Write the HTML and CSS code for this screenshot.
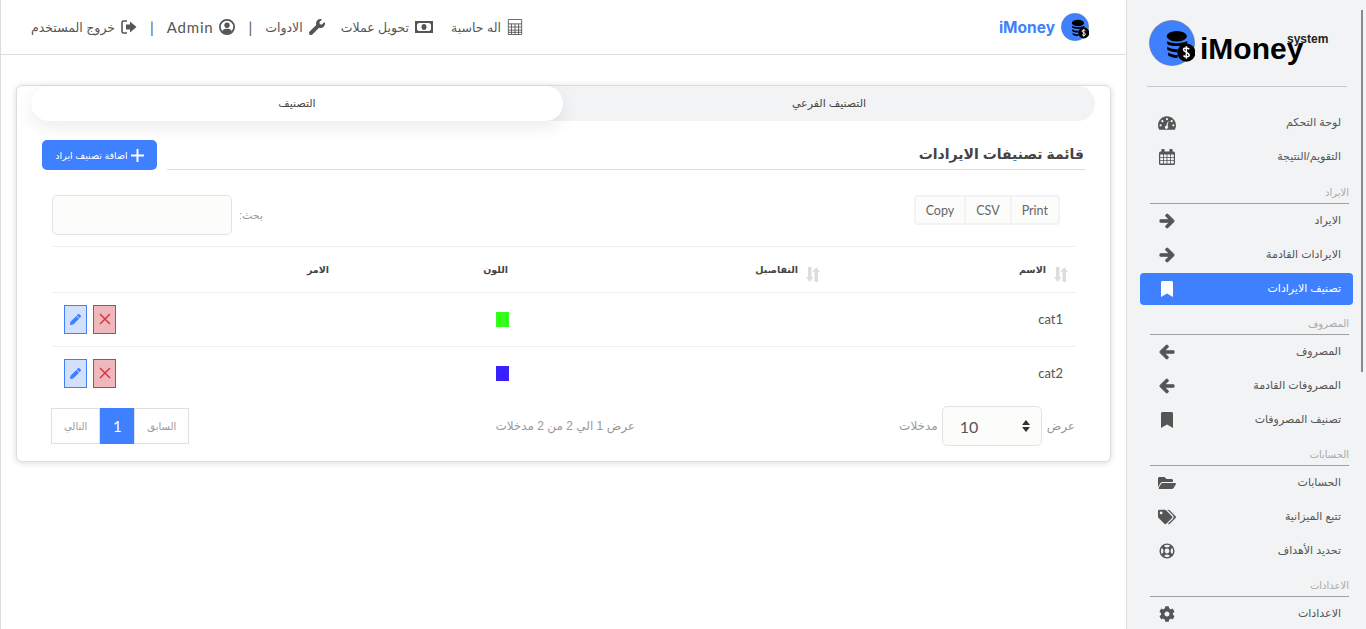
FILE: index.html
```html
<!DOCTYPE html>
<html lang="ar" dir="rtl">
<head>
  <meta charset="UTF-8">
  <title>iMoney</title>
  <link rel="stylesheet" href="styles.css">
</head>
<body>

  <svg class="icon-defs" xmlns="http://www.w3.org/2000/svg">
    <symbol id="i-right" viewBox="0 0 448 512"><path stroke="#555" stroke-width="36" d="M190.5 66.9l22.2-22.2c9.4-9.4 24.6-9.4 33.9 0L441 239c9.4 9.4 9.4 24.6 0 33.9L246.6 467.3c-9.4 9.4-24.6 9.4-33.9 0l-22.2-22.2c-9.5-9.5-9.3-25 .4-34.3L311.4 296H24c-13.3 0-24-10.7-24-24v-32c0-13.3 10.7-24 24-24h287.4L190.9 101.2c-9.8-9.3-10-24.8-.4-34.3z"/></symbol>
    <symbol id="i-left" viewBox="0 0 448 512"><path stroke="#555" stroke-width="36" d="M257.5 445.1l-22.2 22.2c-9.4 9.4-24.6 9.4-33.9 0L7 273c-9.4-9.4-9.4-24.6 0-33.9L201.4 44.7c9.4-9.4 24.6-9.4 33.9 0l22.2 22.2c9.5 9.5 9.3 25-.4 34.3L136.6 216H424c13.3 0 24 10.7 24 24v32c0 13.3-10.7 24-24 24H136.6l120.5 114.8c9.8 9.3 10 24.8.4 34.3z"/></symbol>
    <symbol id="i-bookmark" viewBox="0 0 384 512"><path d="M0 512V48C0 21.49 21.49 0 48 0h288c26.51 0 48 21.49 48 48v464L192 400 0 512z"/></symbol>
    <symbol id="i-folder" viewBox="0 0 576 512"><path d="M572.694 292.093L500.27 416.248A63.997 63.997 0 0 1 444.989 448H45.025c-18.523 0-30.064-20.093-20.731-36.093l72.424-124.155A64 64 0 0 1 152 256h399.964c18.523 0 30.064 20.093 20.73 36.093zM152 224h328v-48c0-26.51-21.49-48-48-48H272l-64-64H48C21.49 64 0 85.49 0 112v278.046l69.077-118.418C86.214 242.25 117.989 224 152 224z"/></symbol>
    <symbol id="i-tags" viewBox="0 0 640 512"><path d="M497.941 225.941L286.059 14.059A48 48 0 0 0 252.118 0H48C21.49 0 0 21.49 0 48v204.118a48 48 0 0 0 14.059 33.941l211.882 211.882c18.744 18.745 49.136 18.746 67.882 0l204.118-204.118c18.745-18.745 18.745-49.137 0-67.882zM112 160c-26.51 0-48-21.49-48-48s21.49-48 48-48 48 21.49 48 48-21.49 48-48 48zm513.941 133.823L421.823 497.941c-18.745 18.745-49.137 18.745-67.882 0l-.36-.36L527.64 323.522c16.999-16.999 26.36-39.6 26.36-63.64s-9.362-46.641-26.36-63.64L331.397 0h48.721a48 48 0 0 1 33.941 14.059l211.882 211.882c18.745 18.745 18.745 49.137 0 67.882z"/></symbol>
    <symbol id="i-cog" viewBox="0 0 512 512"><path d="M487.4 315.7l-42.6-24.6c4.3-23.2 4.3-47 0-70.2l42.6-24.6c4.9-2.8 7.1-8.6 5.5-14-11.1-35.6-30-67.8-54.7-94.6-3.8-4.1-10-5.1-14.8-2.3L380.8 110c-17.9-15.4-38.5-27.3-60.8-35.1V25.8c0-5.6-3.9-10.5-9.4-11.7-36.7-8.2-74.3-7.8-109.2 0-5.5 1.2-9.4 6.1-9.4 11.7V75c-22.2 7.9-42.8 19.8-60.8 35.1L88.7 85.5c-4.9-2.8-11-1.9-14.8 2.3-24.7 26.7-43.6 58.9-54.7 94.6-1.7 5.4.6 11.2 5.5 14L67.3 221c-4.3 23.2-4.3 47 0 70.2l-42.6 24.6c-4.9 2.8-7.1 8.6-5.5 14 11.1 35.6 30 67.8 54.7 94.6 3.8 4.1 10 5.1 14.8 2.3l42.6-24.6c17.9 15.4 38.5 27.3 60.8 35.1v49.2c0 5.6 3.9 10.5 9.4 11.7 36.7 8.2 74.3 7.8 109.2 0 5.5-1.2 9.4-6.1 9.4-11.7v-49.2c22.2-7.9 42.8-19.8 60.8-35.1l42.6 24.6c4.9 2.8 11 1.9 14.8-2.3 24.7-26.7 43.6-58.9 54.7-94.6 1.5-5.5-.7-11.3-5.6-14.1zM256 336c-44.1 0-80-35.9-80-80s35.9-80 80-80 80 35.9 80 80-35.9 80-80 80z"/></symbol>
    <symbol id="i-gauge" viewBox="0 0 24 20"><path fill-rule="evenodd" d="M12 1C5.4 1 0 6.4 0 13c0 2 .5 3.900 1.400 5.500.3.500.8.500 1.200.500h18.800c.4 0 .9 0 1.200-.500C23.500 16.900 24 15 24 13 24 6.400 18.600 1 12 1zM12 3.200a1.500 1.500 0 1 1 0 3 1.500 1.500 0 0 1 0-3zM5.800 6a1.500 1.500 0 1 1 0 3 1.500 1.500 0 0 1 0-3zM18.200 6a1.500 1.500 0 1 1 0 3 1.500 1.500 0 0 1 0-3zM3.500 11.500a1.500 1.500 0 1 1 0 3 1.500 1.500 0 0 1 0-3zM20.500 11.500a1.500 1.500 0 1 1 0 3 1.500 1.500 0 0 1 0-3zM13.200 7.500l.9.300-1.300 6.200a2.200 2.200 0 1 1-1.900-.500z"/></symbol>
    <symbol id="i-calendar" viewBox="0 0 20 20"><path fill-rule="evenodd" d="M4 0h2a1 1 0 0 1 1 1v2h6V1a1 1 0 0 1 1-1h2a1 1 0 0 1 1 1v2h1a2 2 0 0 1 2 2v13a2 2 0 0 1-2 2H2a2 2 0 0 1-2-2V5a2 2 0 0 1 2-2h1V1a1 1 0 0 1 1-1zM1.500 7v3h3.500V7zM6 7v3h3.500V7zM10.500 7v3H14V7zM15 7v3h3.500V7zM1.500 11v3h3.500v-3zM6 11v3h3.500v-3zM10.500 11v3H14v-3zM15 11v3h3.500v-3zM1.500 15v3h3.500v-3zM6 15v3h3.500v-3zM10.500 15v3H14v-3zM15 15v3h3.500v-3z"/></symbol>
    <symbol id="i-pen" viewBox="0 0 512 512"><path d="M497.900 142.100l-46.100 46.100c-4.700 4.700-12.300 4.700-17 0l-111-111c-4.700-4.700-4.700-12.300 0-17l46.100-46.100c18.700-18.700 49.100-18.700 67.900 0l60.100 60.100c18.800 18.700 18.800 49.100 0 67.900zM284.200 99.800L21.600 362.400.4 483.900c-2.900 16.400 11.400 30.600 27.800 27.800l121.500-21.300 262.600-262.600c4.700-4.700 4.700-12.300 0-17l-111-111c-4.800-4.700-12.400-4.700-17.100 0z"/></symbol>
    <symbol id="i-wrench" viewBox="0 0 512 512"><path d="M507.730 109.100c-2.240-9.030-13.540-12.090-20.120-5.510l-74.360 74.360-67.880-11.310-11.310-67.880 74.360-74.360c6.620-6.620 3.430-17.900-5.660-20.160-47.380-11.740-99.550.91-136.580 37.930-39.640 39.640-50.550 97.100-34.050 147.200L18.740 402.760c-24.990 24.990-24.990 65.510 0 90.500 24.990 24.990 65.510 24.990 90.500 0l213.210-213.210c50.120 16.710 107.470 5.680 147.370-34.220 37.070-37.070 49.700-89.320 37.910-136.730z"/></symbol>
    <symbol id="i-sort" viewBox="0 0 14 15"><path d="M2 0h3.500v10h2L3.750 15 0 10h2zM8.500 15H12V5h2L10.250 0 6.500 5h2z"/></symbol>
    <symbol id="i-coins" viewBox="0 0 48 48">
      <circle cx="24" cy="24" r="23.500" fill="#3f80ff" stroke="#5a6a80" stroke-width=".6"/>
      <ellipse cx="29" cy="17" rx="10.500" ry="5.500" fill="#000"/>
      <path d="M19 22c3 3 16 3 21 0v3c-5 3-18 3-21 0zM19 28c3 2 8 3 11 2.500v3c-3 .5-8-.5-11-2.500zM20 34c3 2 7 3 10 2.500v3c-3 .5-7-.5-10-2.500z" fill="#000"/>
      <circle cx="39" cy="34" r="9.500" fill="#000"/>
      <path d="M39 27.500v13M42 30.500c-1-1.500-6-2-6 .5s6 2.500 6 5.500-5 2-6 .5" fill="none" stroke="#fff" stroke-width="1.600"/>
    </symbol>
  </svg>

  <div class="app">

    <div class="main">
      <header class="topbar">
        <nav class="top-nav">
          <a class="top-link">
            <svg class="top-icon" viewBox="0 0 16 18"><path fill="none" stroke="#555" stroke-width="1" d="M.5.500h15v17H.5zM.5 5.500h15M.5 9h15M.5 12.500h15M.5 15h15M4 5.500v12M8 5.500v12M12 5.500v12"/></svg>
            اله حاسبة
          </a>
          <a class="top-link link-money">
            <svg class="top-icon wide" viewBox="0 0 18 12"><path fill-rule="evenodd" fill="#555" d="M0 0h18v12H0zM3.500 2 2 3.500v5L3.500 10h11L16 8.500v-5L14.500 2zM9 3c1.500 0 2.500 1.300 2.500 3S10.500 9 9 9 6.500 7.700 6.500 6 7.500 3 9 3z"/></svg>
            تحويل عملات
          </a>
          <a class="top-link link-tools">
            <svg class="top-icon"><use href="#i-wrench"/></svg>
            الادوات
          </a>
          <span class="top-sep">|</span>
          <a class="top-link">
            <svg class="top-icon" viewBox="0 0 18 18"><circle cx="9" cy="9" r="8" fill="none" stroke="#555" stroke-width="2"/><circle cx="9" cy="7" r="3" fill="#555"/><path d="M3.500 14c1-2.500 3-3 5.500-3s4.500.5 5.500 3c-3 3-8 3-11 0z" fill="#555"/></svg>
            <span class="admin-name" dir="ltr">Admin</span>
          </a>
          <span class="top-sep">|</span>
          <a class="top-link">
            <svg class="top-icon" viewBox="0 0 16 14"><path fill="none" stroke="#555" stroke-width="1.600" d="M6 1H2.500A1.500 1.500 0 0 0 1 2.500v9A1.500 1.500 0 0 0 2.500 13H6"/><path fill="#555" d="M5 4.500h4V1.500L15.500 7 9 12.500v-3H5z"/></svg>
            خروج المستخدم
          </a>
        </nav>
        <div class="brand">
          <svg class="brand-logo"><use href="#i-coins"/></svg>
          <span class="brand-name">iMoney</span>
        </div>
      </header>

      <main class="content">
        <section class="card">
          <div class="tabs">
            <div class="tab">التصنيف الفرعي</div>
            <div class="tab active">التصنيف</div>
          </div>

          <div class="title-row">
            <h1 class="title">قائمة تصنيفات الايرادات</h1>
            <button class="add-btn">
              <svg class="add-icon" viewBox="0 0 12 12"><path d="M6 0v12M0 6h12" stroke="#fff" stroke-width="1.800"/></svg>
              اضافة تصنيف ايراد
            </button>
          </div>

          <div class="tools">
            <div class="export-btns" dir="ltr">
              <button class="export-btn">Copy</button>
              <button class="export-btn">CSV</button>
              <button class="export-btn">Print</button>
            </div>
            <label class="search">
              <span>بحث:</span>
              <input class="search-input" type="text">
            </label>
          </div>

          <table class="cat-table">
            <thead>
              <tr>
                <th class="col-name"><svg class="sort-icon"><use href="#i-sort"/></svg>الاسم</th>
                <th class="col-details"><svg class="sort-icon"><use href="#i-sort"/></svg>التفاصيل</th>
                <th class="col-color">اللون</th>
                <th class="col-action">الامر</th>
              </tr>
            </thead>
            <tbody>
              <tr>
                <td class="cell-name">cat1</td>
                <td></td>
                <td><span class="swatch swatch-green"></span></td>
                <td class="cell-action">
                  <a class="act-btn act-edit"><svg class="act-pen"><use href="#i-pen"/></svg></a>
                  <a class="act-btn act-del"><svg class="act-x" viewBox="0 0 12 12"><path d="M1 1l10 10M11 1 1 11" stroke="#dc3545" stroke-width="1.500"/></svg></a>
                </td>
              </tr>
              <tr>
                <td class="cell-name">cat2</td>
                <td></td>
                <td><span class="swatch swatch-blue"></span></td>
                <td class="cell-action">
                  <a class="act-btn act-edit"><svg class="act-pen"><use href="#i-pen"/></svg></a>
                  <a class="act-btn act-del"><svg class="act-x" viewBox="0 0 12 12"><path d="M1 1l10 10M11 1 1 11" stroke="#dc3545" stroke-width="1.500"/></svg></a>
                </td>
              </tr>
            </tbody>
          </table>

          <div class="table-foot">
            <div class="length">
              <span>عرض</span>
              <select class="length-select" dir="ltr"><option>10</option></select>
              <span>مدخلات</span>
            </div>
            <div class="info">عرض 1 الي 2 من 2 مدخلات</div>
            <div class="pager">
              <a class="page-btn">السابق</a>
              <a class="page-btn current">1</a>
              <a class="page-btn">التالي</a>
            </div>
          </div>
        </section>
      </main>
    </div>

    <aside class="sidebar">
      <div class="side-logo">
        <svg class="side-logo-mark"><use href="#i-coins"/></svg>
        <span class="side-logo-name">iMoney</span>
        <span class="side-logo-sub">system</span>
      </div>

      <ul class="menu first">
        <li class="menu-item"><span>لوحة التحكم</span><svg class="menu-icon"><use href="#i-gauge"/></svg></li>
        <li class="menu-item"><span>التقويم/النتيجة</span><svg class="menu-icon"><use href="#i-calendar"/></svg></li>
      </ul>

      <div class="menu-label">الايراد</div>
      <ul class="menu">
        <li class="menu-item"><span>الايراد</span><svg class="menu-icon"><use href="#i-right"/></svg></li>
        <li class="menu-item"><span>الايرادات القادمة</span><svg class="menu-icon"><use href="#i-right"/></svg></li>
        <li class="menu-item active"><span>تصنيف الايرادات</span><svg class="menu-icon"><use href="#i-bookmark"/></svg></li>
      </ul>

      <div class="menu-label">المصروف</div>
      <ul class="menu">
        <li class="menu-item"><span>المصروف</span><svg class="menu-icon"><use href="#i-left"/></svg></li>
        <li class="menu-item"><span>المصروفات القادمة</span><svg class="menu-icon"><use href="#i-left"/></svg></li>
        <li class="menu-item"><span>تصنيف المصروفات</span><svg class="menu-icon"><use href="#i-bookmark"/></svg></li>
      </ul>

      <div class="menu-label">الحسابات</div>
      <ul class="menu">
        <li class="menu-item"><span>الحسابات</span><svg class="menu-icon"><use href="#i-folder"/></svg></li>
        <li class="menu-item"><span>تتبع الميزانية</span><svg class="menu-icon"><use href="#i-tags"/></svg></li>
        <li class="menu-item"><span>تحديد الأهداف</span>
          <svg class="menu-icon" viewBox="0 0 18 18"><circle cx="9" cy="9" r="7.700" fill="none" stroke="#555" stroke-width="1.600"/><circle cx="9" cy="9" r="3.500" fill="none" stroke="#555" stroke-width="1.600"/><path d="M3.600 3.600l3 3M14.400 3.600l-3 3M3.600 14.400l3-3M14.400 14.400l-3-3" stroke="#555" stroke-width="3.500"/></svg>
        </li>
      </ul>

      <div class="menu-label">الاعدادات</div>
      <ul class="menu">
        <li class="menu-item"><span>الاعدادات</span><svg class="menu-icon"><use href="#i-cog"/></svg></li>
      </ul>

      <div class="side-thumb"></div>
    </aside>

  </div>

</body>
</html>
```

FILE: styles.css
```css
* {
  box-sizing: border-box;
}

html, body {
  height: 100%;
}

body {
  margin: 0;
  overflow: hidden;
  background: #fff;
  color: #555;
  font-family: "Liberation Sans", "DejaVu Sans", sans-serif;
  font-size: 12px;
}

.icon-defs {
  display: none;
}

.app {
  display: flex;
  height: 629px;
  direction: ltr;
}

/* main column */

.main {
  width: 1126px;
  direction: rtl;
  border-left: 1px solid #ddd;
}

.topbar {
  display: flex;
  flex-direction: row-reverse;
  justify-content: space-between;
  align-items: center;
  height: 55px;
  padding: 0 37px 0 30px;
  border-bottom: 1px solid #ddd;
}

.brand {
  display: flex;
  align-items: center;
  gap: 6px;
}

.brand-logo {
  width: 28px;
  height: 28px;
}

.brand-name {
  color: #3f80ff;
  font-family: Inter, sans-serif;
  font-size: 15.5px;
  font-weight: 700;
}

.top-nav {
  display: flex;
  align-items: center;
}

.top-link {
  display: flex;
  align-items: center;
  gap: 6px;
  color: #555;
  font-size: 12.5px;
}

.link-money {
  margin-right: 18px;
}

.link-tools {
  margin-right: 16px;
}

.top-icon {
  width: 16px;
  height: 16px;
  fill: #555;
}

.top-icon.wide {
  width: 18px;
  height: 12px;
}

.admin-name {
  font-family: Lato, sans-serif;
  font-size: 15px;
  letter-spacing: .8px;
}

.top-sep {
  margin: 0 13px;
  color: #555;
  font-family: Lato, sans-serif;
  font-size: 15px;
}

.content {
  padding: 30px 15px 0 15px;
}

.card {
  height: 377px;
  background: #fff;
  border: 1px solid #ddd;
  border-radius: 6px;
  box-shadow: 0 1px 6px rgba(0, 0, 0, .15);
}

.tabs {
  display: flex;
  height: 35px;
  margin: 0 15px 0 14px;
  background: #f1f3f5;
  border-radius: 18px;
}

.tab {
  flex: 1;
  display: flex;
  align-items: center;
  justify-content: center;
  color: #444;
  font-size: 11px;
}

.tab.active {
  background: #fff;
  border-radius: 18px;
  box-shadow: 0 6px 18px rgba(0, 0, 0, .08);
}

.title-row {
  display: flex;
  align-items: stretch;
  gap: 10px;
  height: 30px;
  margin: 19px 25px 0 25px;
}

.title {
  flex: 1;
  margin: 0;
  padding-right: 1px;
  border-bottom: 1px solid #ddd;
  color: #444;
  font-size: 14px;
  font-weight: 700;
  line-height: 29px;
}

.add-btn {
  display: flex;
  align-items: center;
  justify-content: center;
  gap: 3px;
  width: 115px;
  padding: 0;
  background: #3f80ff;
  border: 0;
  border-radius: 5px;
  color: #fff;
  font-family: inherit;
  font-size: 9.5px;
}

.add-icon {
  width: 13px;
  height: 13px;
}

.tools {
  display: flex;
  justify-content: space-between;
  align-items: flex-start;
  margin: 25px 34px 0 35px;
  padding-right: 16px;
  height: 52px;
  border-bottom: 1px solid #eee;
}

.export-btns {
  display: flex;
  height: 30px;
  border: 2px solid #f1f3f5;
  border-radius: 4px;
  background: #fcfcfa;
}

.export-btn {
  padding: 0 10px;
  background: none;
  border: 0;
  border-right: 2px solid #f1f3f5;
  color: #666;
  font-family: Lato, sans-serif;
  font-size: 12.5px;
}

.export-btn:last-child {
  border-right: 0;
}

.search {
  display: flex;
  align-items: center;
  gap: 7px;
  color: #999;
  font-size: 11px;
}

.search-input {
  width: 180px;
  height: 40px;
  background: #fcfcfa;
  border: 1px solid #e3e3e3;
  border-radius: 5px;
}

.cat-table {
  width: 1024px;
  margin: 0 34px 0 35px;
  border-collapse: collapse;
  table-layout: fixed;
}

.cat-table th {
  height: 45px;
  padding: 0 8px 0 0;
  border-bottom: 1px solid #eee;
  color: #444;
  font-size: 9.5px;
  font-weight: 700;
  text-align: right;
}

.cat-table td {
  height: 54px;
  padding: 0;
  border-bottom: 1px solid #eee;
  color: #555;
}

.cat-table tbody tr:last-child td {
  border-bottom: 0;
}

.col-name {
  width: 248px;
}

.col-details {
  width: 308px;
}

.col-color {
  width: 180px;
}

.cat-table .col-color {
  padding-right: 12px;
}

.cat-table .col-action {
  padding-right: 11px;
}

.sort-icon {
  width: 14px;
  height: 15px;
  margin-left: 8px;
  margin-bottom: -9px;
  fill: #ddd;
}

.cell-name {
  font-family: Lato, sans-serif;
  font-size: 13px;
}

.cat-table .cell-name {
  padding-right: 13px;
}

.swatch {
  display: block;
  width: 13px;
  height: 15px;
  margin-right: 11px;
}

.swatch-green {
  background: #33ff1f;
}

.swatch-blue {
  background: #3a1fff;
}

.cell-action {
  direction: ltr;
  font-size: 0;
}

.cat-table .cell-action {
  padding-left: 12px;
}

.act-btn {
  display: inline-flex;
  align-items: center;
  justify-content: center;
  width: 23px;
  height: 29px;
  margin-right: 6px;
  vertical-align: middle;
  border: 1px solid;
}

.act-edit {
  background: #d2e0fb;
  border-color: #3f80ff;
}

.act-del {
  background: #efb8bd;
  border-color: #d03b4a;
}

.act-pen {
  width: 11px;
  height: 11px;
  fill: #3f80ff;
}

.act-x {
  width: 12px;
  height: 12px;
}

.table-foot {
  display: flex;
  justify-content: space-between;
  align-items: center;
  height: 40px;
  margin: 6px 35px 0 34px;
  color: #999;
  font-size: 12px;
}

.info {
  margin-left: 42px;
}

.length {
  display: flex;
  align-items: center;
  gap: 4px;
}

.length span:first-child {
  margin-left: 1px;
}

.length-select {
  width: 100px;
  height: 40px;
  padding: 0 0 0 17px;
  appearance: none;
  background: #fcfcfa url("data:image/svg+xml,%3Csvg xmlns='http://www.w3.org/2000/svg' viewBox='0 0 8 12'%3E%3Cpath d='M4 0 8 5H0zM4 12 0 7h8z' fill='%23333'/%3E%3C/svg%3E") no-repeat 79px center / 8px 12px;
  border: 1px solid #e3e3e3;
  border-radius: 5px;
  color: #555;
  font-family: Lato, sans-serif;
  font-size: 16px;
}

.pager {
  display: flex;
  height: 36px;
}

.page-btn {
  display: flex;
  align-items: center;
  justify-content: center;
  padding: 0 12px;
  border: 1px solid #dee0e4;
  color: #999;
  font-size: 10px;
}

.page-btn.current {
  width: 34px;
  padding: 0;
  background: #3f80ff;
  border: 0;
  color: #fff;
  font-family: Lato, sans-serif;
  font-size: 15px;
}

/* sidebar */

.sidebar {
  position: relative;
  width: 240px;
  height: 629px;
  overflow: hidden;
  direction: rtl;
  background: #f1f3f5;
  border-left: 1px solid #ddd;
}

.side-logo {
  position: relative;
  display: flex;
  align-items: center;
  height: 87px;
  margin: 0 19px 0 20px;
  direction: ltr;
  border-bottom: 1px solid #c8c8c8;
}

.side-logo-mark {
  width: 46px;
  height: 46px;
  margin-left: 2px;
}

.side-logo-name {
  margin-left: 5px;
  margin-top: 12px;
  color: #000;
  font-size: 30px;
  font-weight: 700;
}

.side-logo-sub {
  position: absolute;
  top: 32px;
  left: 140px;
  color: #222;
  font-size: 12px;
  font-weight: 700;
}

.menu {
  margin: 0;
  padding: 1px 0 0;
  list-style: none;
}

.menu.first {
  margin-top: 19px;
}

.menu.first + .menu-label {
  margin-top: 11px;
}

.menu-item {
  display: flex;
  justify-content: space-between;
  align-items: center;
  height: 32px;
  margin: 0 13px 2px 13px;
  padding: 0 12px 0 18px;
  border-radius: 4px;
  color: #555;
  font-size: 11px;
}

.menu-item span {
  margin-top: -2px;
}

.menu-item.active {
  background: #3f80ff;
  color: #fff;
}

.menu-icon {
  width: 18px;
  height: 16px;
  fill: #555;
}

.menu-item.active .menu-icon {
  fill: #fff;
}

.menu-label {
  height: 20px;
  margin: 10px 17px 0 23px;
  border-bottom: 1px solid #a0a0a0;
  color: #aaa;
  font-size: 10px;
  line-height: 18px;
}

.side-thumb {
  position: absolute;
  top: 10px;
  right: 3px;
  width: 2px;
  height: 362px;
  background: #8a8a8a;
}
```
